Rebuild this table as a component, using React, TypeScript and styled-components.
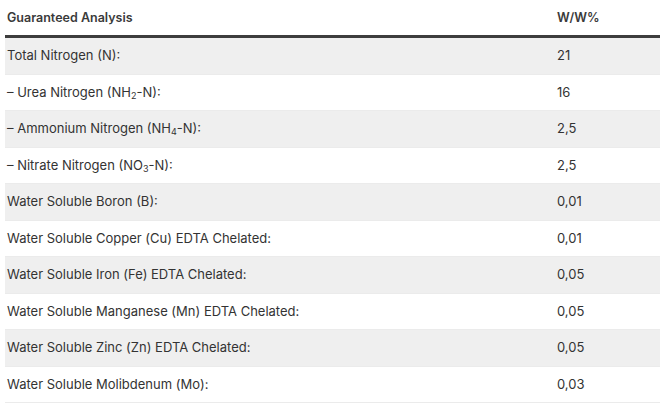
import React from "react";
import styled, { createGlobalStyle } from "styled-components";

const GlobalStyle = createGlobalStyle`
  body {
    margin: 0;
    background: #fff;
    font-family: Inter, "Noto Sans", sans-serif;
  }
`;

interface Row {
  label: React.ReactNode;
  value: string;
}

const rows: Row[] = [
  { label: "Total Nitrogen (N):", value: "21" },
  { label: <>– Urea Nitrogen (NH<sub>2</sub>-N):</>, value: "16" },
  { label: <>– Ammonium Nitrogen (NH<sub>4</sub>-N):</>, value: "2,5" },
  { label: <>– Nitrate Nitrogen (NO<sub>3</sub>-N):</>, value: "2,5" },
  { label: "Water Soluble Boron (B):", value: "0,01" },
  { label: "Water Soluble Copper (Cu) EDTA Chelated:", value: "0,01" },
  { label: "Water Soluble Iron (Fe) EDTA Chelated:", value: "0,05" },
  { label: "Water Soluble Manganese (Mn) EDTA Chelated:", value: "0,05" },
  { label: "Water Soluble Zinc (Zn) EDTA Chelated:", value: "0,05" },
  { label: "Water Soluble Molibdenum (Mo):", value: "0,03" },
];

const Wrap = styled.div`
  padding: 0 10px 0 5px;
`;

const Table = styled.table`
  width: 655px;
  border-collapse: collapse;
  font-size: 13px;
  color: #333;
`;

const HeadCell = styled.th<{ $value?: boolean }>`
  text-align: left;
  font-weight: 600;
  font-size: 12.5px;
  color: #3a3a3a;
  height: 35px;
  padding: 0 2px;
  width: ${(p) => (p.$value ? "101px" : "auto")};
  border-bottom: 3px solid #3d3d3d;
`;

const BodyRow = styled.tr`
  &:nth-child(odd) {
    background: #efefef;
  }
  border-bottom: 1px solid #ebebeb;
`;

const Cell = styled.td`
  padding: 8px 2px;
  line-height: 19.5px;
  vertical-align: middle;

  sub {
    font-size: 9px;
    line-height: 0;
    vertical-align: -2px;
  }
`;

const App: React.FC = () => {
  return (
    <Wrap>
      <GlobalStyle />
      <Table>
        <thead>
          <tr>
            <HeadCell>Guaranteed Analysis</HeadCell>
            <HeadCell $value>W/W%</HeadCell>
          </tr>
        </thead>
        <tbody>
          {rows.map((r, i) => (
            <BodyRow key={i}>
              <Cell>{r.label}</Cell>
              <Cell>{r.value}</Cell>
            </BodyRow>
          ))}
        </tbody>
      </Table>
    </Wrap>
  );
};

export default App;
